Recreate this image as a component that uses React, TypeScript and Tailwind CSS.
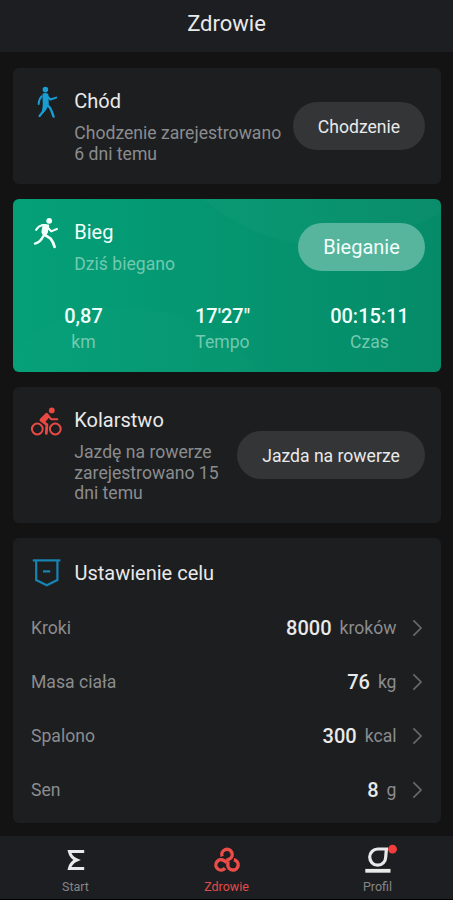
import type { ReactNode } from 'react';

interface Stat {
  value: string;
  label: string;
}

interface Goal {
  id: string;
  label: string;
  value: string;
  unit: string;
}

const stats: Stat[] = [
  { value: '0,87', label: 'km' },
  { value: '17\'27"', label: 'Tempo' },
  { value: '00:15:11', label: 'Czas' },
];

const goals: Goal[] = [
  { id: 'steps', label: 'Kroki', value: '8000', unit: 'kroków' },
  { id: 'weight', label: 'Masa ciała', value: '76', unit: 'kg' },
  { id: 'calories', label: 'Spalono', value: '300', unit: 'kcal' },
  { id: 'sleep', label: 'Sen', value: '8', unit: 'g' },
];

function WalkIcon() {
  return (
    <svg width="32" height="36" viewBox="30 84 32 36" fill="none" stroke="#1a9dd3" strokeLinecap="round" strokeLinejoin="round">
      <circle cx="45.4" cy="89.6" r="2.8" fill="#1a9dd3" stroke="none" />
      <path d="M43.2 94.2Q45.5 93.4 47.6 94.4L48 104.6Q46 109.4 42.6 112.6L43.6 104.6Z" fill="#1a9dd3" strokeWidth="1.6" />
      <path d="M41.6 96.4Q38.8 99.4 38.7 104" strokeWidth="2" />
      <path d="M47.6 96.6L50.4 99.5L56.2 97.6" strokeWidth="2" />
      <path d="M45.2 106.5Q43.4 112.4 39.6 116" strokeWidth="2.4" />
      <path d="M47.6 105.4Q50.8 107.8 51.4 110.6L53.6 116.6" strokeWidth="2.4" />
    </svg>
  );
}

function RunIcon() {
  return (
    <svg width="32" height="36" viewBox="30 215 32 36" fill="none" stroke="#f2fffb" strokeLinecap="round" strokeLinejoin="round">
      <circle cx="49.2" cy="220.8" r="2.9" fill="#f2fffb" stroke="none" />
      <path d="M36.2 229.8Q38.4 226 42 225.2L45.6 225" strokeWidth="2.2" />
      <path d="M43.6 225L48.2 225.6L46.8 232.6L44.2 235.8L42.4 232Z" fill="#f2fffb" strokeWidth="2" />
      <path d="M48 227.8L51.2 231.4L57 229" strokeWidth="2.1" />
      <path d="M43 236.6Q40.4 242.4 35 243.6" strokeWidth="2.5" />
      <path d="M44.4 234.6L50.6 238.6Q53 241.6 54.6 246.8" strokeWidth="2.8" />
    </svg>
  );
}

function BikeIcon() {
  return (
    <svg width="32" height="36" viewBox="30.5 402 32 36" fill="none" stroke="#e84a43" strokeLinecap="round" strokeLinejoin="round">
      <circle cx="52.3" cy="409.4" r="2.9" fill="#e84a43" stroke="none" />
      <circle cx="37.8" cy="428" r="5.4" strokeWidth="2" />
      <circle cx="55.8" cy="428" r="5.4" strokeWidth="2" />
      <path d="M47 413L41.4 418.6L44.2 421L48.8 415.8Z" fill="#e84a43" strokeWidth="2.4" />
      <path d="M48 413.6L51.6 418.2L57.8 418.2" strokeWidth="2" />
      <path d="M41.6 419.4L47.4 423.6L46.8 432.4" strokeWidth="2.8" />
    </svg>
  );
}

function GoalIcon() {
  return (
    <svg width="32" height="36" viewBox="31 554 32 36" fill="none" stroke="#1784b3" strokeWidth="2.2">
      <path d="M32.8 560.4H60.4" />
      <path d="M36.2 560V580L46.8 585.2L57.4 580V560" />
      <path d="M43 571.4H50.2" />
    </svg>
  );
}

function StartIcon() {
  return (
    <svg width="32" height="28" viewBox="59.6 846 32 28" fill="none" stroke="#e9e9ea" strokeWidth="3">
      <path d="M83.8 851.4H69Q70.4 857.6 76.4 860Q70.4 862.4 69 868.6H83.8" />
    </svg>
  );
}

function HealthIcon() {
  return (
    <svg width="32" height="28" viewBox="-16 -15.4 32 28" fill="none" stroke="#ec4d48" strokeWidth="3.4">
      <path d="M-4.9 -5.1A5.2 5.2 0 1 1 2.4 -2.3L-0.6 -0.8" />
      <path d="M-4.9 -5.1A5.2 5.2 0 1 1 2.4 -2.3L-0.6 -0.8" transform="rotate(120)" />
      <path d="M-4.9 -5.1A5.2 5.2 0 1 1 2.4 -2.3L-0.6 -0.8" transform="rotate(240)" />
    </svg>
  );
}

function ProfileIcon() {
  return (
    <svg className="overflow-visible" width="40" height="28" viewBox="357.5 846 40 28" fill="none" stroke="#e9e9ea" strokeWidth="3.2">
      <path d="M377.2 849H385.9L385.2 857.2A8 8.1 0 1 1 377.2 849Z" />
      <path d="M364.8 870.8H390" strokeWidth="3.8" />
      <circle cx="392" cy="849.2" r="4.4" fill="#ef3e3b" stroke="none" />
    </svg>
  );
}

function ActivityHeader({ icon, title, text, textClass, children }: {
  icon: ReactNode;
  title: string;
  text: string;
  textClass: string;
  children: ReactNode;
}) {
  return (
    <div className="flex items-start">
      <div className="w-8 shrink-0">{icon}</div>
      <div className="ml-[12.3px] min-w-0 flex-1">
        <h2 className="mt-[3px] text-[20px] leading-7">{title}</h2>
        <p className={`mt-2 text-[17.6px] leading-[20.5px] ${textClass}`}>{text}</p>
      </div>
      {children}
    </div>
  );
}

function NavItem({ icon, label, active }: { icon: ReactNode; label: string; active?: boolean }) {
  return (
    <button className="flex flex-1 flex-col items-center pt-[10px]">
      {icon}
      <span className={`mt-1 text-[12.5px] leading-[18px] ${active ? 'text-[#e04c49]' : 'text-[#858688]'}`}>{label}</span>
    </button>
  );
}

export default function App() {
  return (
    <div className="flex h-[900px] w-[453px] flex-col overflow-hidden bg-[#131313] font-['Roboto',sans-serif] text-[#e9e9ea]">
      <header className="flex h-[52px] shrink-0 justify-center bg-[#1d1e21] pt-2">
        <h1 className="text-[22px] leading-8">Zdrowie</h1>
      </header>

      <main className="flex flex-1 flex-col gap-[15px] px-[12.5px] pt-4">
        {/* Walking */}
        <section className="h-[116px] rounded-md bg-[#1d1e20] pt-4 pr-[15.5px] pl-[17.5px]">
          <ActivityHeader icon={<WalkIcon />} title="Chód" text="Chodzenie zarejestrowano 6 dni temu" textClass="w-[212px] text-[#8b8c8e]">
            <button className="mt-[18px] h-12 w-[132px] shrink-0 rounded-full bg-[#343537] pt-0.5 text-[17.6px]">Chodzenie</button>
          </ActivityHeader>
        </section>

        {/* Running */}
        <section className="relative h-[173px] overflow-hidden rounded-md bg-linear-to-r from-[#04a078] to-[#058b68] text-[#f2fffb]">
          <svg className="absolute inset-0" width="428" height="173" viewBox="0 0 428 173">
            <path d="M110 108Q200 112 248 173H0V150Q50 108 110 108Z" fill="#ffffff" fillOpacity="0.012" />
            <path d="M190 0H428V14Q400 30 330 48Q250 50 190 0Z" fill="#ffffff" fillOpacity="0.025" />
          </svg>
          <div className="relative pt-4 pr-[15.5px] pl-[17.5px]">
            <ActivityHeader icon={<RunIcon />} title="Bieg" text="Dziś biegano" textClass="text-[#71c9b0]">
              <button className="mt-2 h-12 w-[127px] shrink-0 rounded-full bg-[#57b49d] text-[20px]">Bieganie</button>
            </ActivityHeader>
          </div>
          <div className="relative mt-[27px] grid grid-cols-[142px_136px_158px] text-center">
            {stats.map((stat) => (
              <div key={stat.label}>
                <div className="text-[20px] leading-7 font-medium">{stat.value}</div>
                <div className="text-[17.6px] leading-6 text-[#71c9b0]">{stat.label}</div>
              </div>
            ))}
          </div>
        </section>

        {/* Cycling */}
        <section className="h-[136px] rounded-md bg-[#1d1e20] pt-4 pr-[15.5px] pl-[17.5px]">
          <ActivityHeader icon={<BikeIcon />} title="Kolarstwo" text="Jazdę na rowerze zarejestrowano 15 dni temu" textClass="text-[#8b8c8e]">
            <button className="mt-7 h-12 w-[188px] shrink-0 rounded-full bg-[#343537] pt-0.5 text-[17.6px]">Jazda na rowerze</button>
          </ActivityHeader>
        </section>

        {/* Goals */}
        <section className="h-[285px] rounded-md bg-[#1d1e20] pt-4 pr-[18px] pl-[18.5px]">
          <div className="flex items-start">
            <GoalIcon />
            <h2 className="mt-[5px] ml-[11.5px] text-[20px] leading-7">Ustawienie celu</h2>
          </div>
          <ul className="mt-[11px]">
            {goals.map((goal) => (
              <li key={goal.id} className="flex h-[54px] items-center">
                <span className="flex-1 pt-px text-[17.6px] text-[#8b8c8e]">{goal.label}</span>
                <span className="text-[20px] font-medium">{goal.value}</span>
                <span className="ml-2 pt-px text-[17.6px] text-[#8b8c8e]">{goal.unit}</span>
                <svg className="ml-[15px]" width="11" height="18" viewBox="0 0 11 18" fill="none" stroke="#69696b" strokeWidth="1.7">
                  <path d="M1.4 1.4L9 9L1.4 16.6" />
                </svg>
              </li>
            ))}
          </ul>
        </section>
      </main>

      <nav className="flex h-16 shrink-0 border-b border-black bg-[#1d1e21]">
        <NavItem icon={<StartIcon />} label="Start" />
        <NavItem icon={<HealthIcon />} label="Zdrowie" active />
        <NavItem icon={<ProfileIcon />} label="Profil" />
      </nav>
    </div>
  );
}
